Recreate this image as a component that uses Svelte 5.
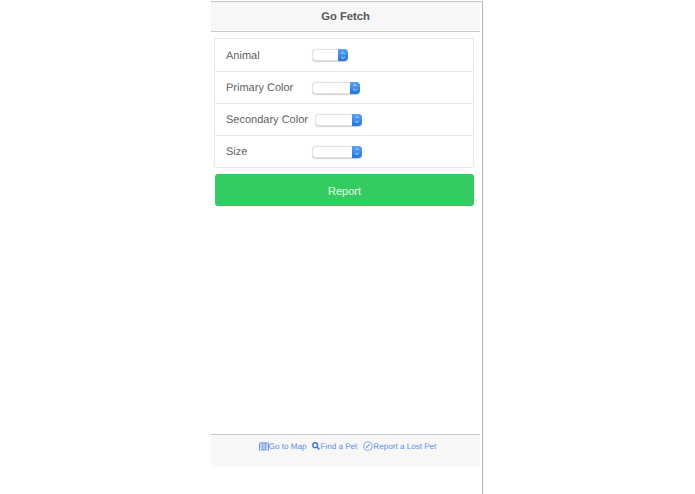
<script>
	// Report form for the Go Fetch mobile page
	const fields = [
		{ label: 'Animal', width: 36 },
		{ label: 'Primary Color', width: 47.5 },
		{ label: 'Secondary Color', width: 47 },
		{ label: 'Size', width: 49.5 }
	];
</script>

<div class="screen">
	<header class="bar">
		<h1>Go Fetch</h1>
	</header>

	<main>
		<ul class="fields">
			{#each fields as field}
				<li>
					<span class="label">{field.label}</span>
					<span class="select" style="width: {field.width}px">
						<span class="stepper">
							<svg width="6" height="9" viewBox="0 0 6 9" fill="none" stroke="#cfe3ff" stroke-width="1">
								<path d="M1.2 3.2 3 1.4 4.8 3.2" />
								<path d="M1.2 5.8 3 7.6 4.8 5.8" />
							</svg>
						</span>
					</span>
				</li>
			{/each}
		</ul>
		<button type="button" class="report">Report</button>
	</main>

	<footer>
		<a href="#map">
			<svg width="10" height="9" viewBox="0 0 10 9" fill="none" stroke="#5b8de6" stroke-width="0.9">
				<path d="M0.5 1.2 3.3 0.6 5 1.2 6.7 0.6 9.5 1.2V8.2L6.7 7.6 5 8.2 3.3 7.6 0.5 8.2Z" />
				<path d="M3.3 0.6V7.6M5 1.2V8.2M6.7 0.6V7.6M1.3 3H2.5M1.3 5H2.5M7.5 3H8.7M7.5 5H8.7" />
			</svg>Go to Map
		</a>
		<a href="#find">
			<svg width="8" height="8" viewBox="0 0 9 9" fill="none" stroke="#3f76dc" stroke-width="1.6">
				<circle cx="3.6" cy="3.6" r="2.7" />
				<path d="M5.6 5.6 8.4 8.4" />
			</svg>Find a Pet
		</a>
		<a href="#report">
			<svg width="10" height="10" viewBox="0 0 10 10" fill="none" stroke="#6d98e6" stroke-width="0.8">
				<rect x="0.7" y="0.9" width="8.4" height="8.4" rx="3.4" />
				<path d="M3.2 6.8 6.8 3.2" stroke-width="1.2" />
			</svg>Report a Lost Pet
		</a>
	</footer>
</div>

<style>
	:global(body) {
		margin: 0;
		background: #fff;
		font-family: "Liberation Sans", Arial, sans-serif;
		text-rendering: geometricPrecision;
	}

	.screen {
		box-sizing: border-box;
		width: 272px;
		height: 493px;
		margin: 1px 0 0 211px;
		border-top: 1px solid #c8c8c8;
		border-right: 1px solid #b4b4b4;
		display: flex;
		flex-direction: column;
		overflow: hidden;
	}

	.bar {
		height: 29px;
		margin-right: 2px;
		background: #f7f7f7;
		border-bottom: 1px solid #c9c9c9;
		display: flex;
		align-items: center;
		justify-content: center;
	}

	h1 {
		margin: 0;
		padding-top: 1px;
		font-size: 11.2px;
		font-weight: 700;
		color: #555;
	}

	main {
		padding: 6px 8px 0 3px;
	}

	.fields {
		margin: 0;
		padding: 0;
		list-style: none;
		background: #fff;
		border: 1px solid #e8e8e8;
		border-radius: 2px;
	}

	li {
		box-sizing: border-box;
		height: 32px;
		padding-left: 11px;
		display: flex;
		align-items: center;
		border-top: 1px solid #e8e8e8;
	}

	li:first-child {
		border-top: 0;
	}

	.label {
		box-sizing: border-box;
		min-width: 86px;
		padding: 1px 7.5px 0 0;
		font-size: 11px;
		color: #5f5f5f;
		white-space: nowrap;
	}

	.select {
		box-sizing: border-box;
		height: 12px;
		display: flex;
		justify-content: flex-end;
		background: #fff;
		border: 1px solid #e2e2e2;
		border-radius: 4px;
		box-shadow: 0 0.5px 1px #d0d0d0;
	}

	.stepper {
		width: 10px;
		margin: -1px -1px -1px 0;
		background: linear-gradient(#5aa2f8, #2273e4);
		border-radius: 0 4px 4px 0;
		display: flex;
		align-items: center;
		justify-content: center;
	}

	.report {
		display: block;
		width: 259px;
		height: 32px;
		margin: 6px 0 0 1px;
		padding: 1px 0 0;
		background: #34cc61;
		border: 0;
		border-radius: 3px;
		color: #eafbef;
		font-family: inherit;
		font-size: 11px;
	}

	footer {
		box-sizing: border-box;
		height: 33px;
		margin: auto 2px 27px 0;
		padding: 5px 0 0 4px;
		background: #f7f7f7;
		border-top: 1px solid #c9c9c9;
		display: flex;
		justify-content: center;
		gap: 6px;
		font-size: 8.1px;
	}

	a {
		height: 12px;
		display: flex;
		align-items: center;
		color: #5b8de6;
		text-decoration: none;
	}

	svg {
		display: block;
	}
</style>
